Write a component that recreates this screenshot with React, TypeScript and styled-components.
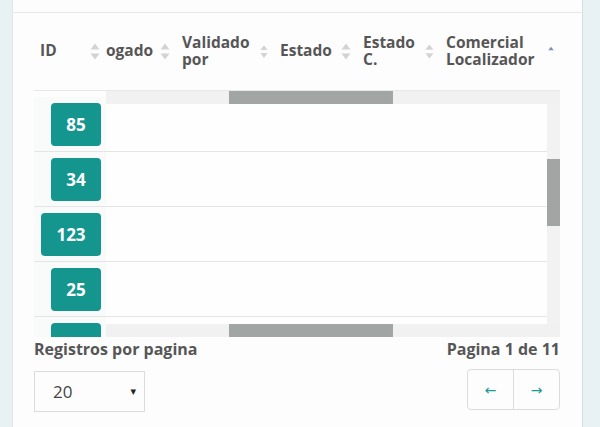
import React from "react";
import styled, { createGlobalStyle } from "styled-components";

const GlobalStyle = createGlobalStyle`
  body {
    margin: 0;
    background: #e8f2f5;
    font-family: "Open Sans", "Liberation Sans", sans-serif;
  }
`;

const columns = [
  { label: "ID", width: 72, sort: "none" },
  { label: "ogado", width: 70, sort: "none", clipped: true },
  { label: "Validado por", width: 98, sort: "none" },
  { label: "Estado", width: 83, sort: "none" },
  { label: "Estado C.", width: 83, sort: "none" },
  { label: "Comercial Localizador", width: 120, sort: "asc" },
];

// last row is cut by the scroll area, its number is not visible
const ids = ["85", "34", "123", "25", ""];

function SortIcon({ active }: { active: boolean }) {
  return (
    <svg width="10" height="17" viewBox="0 0 10 17">
      <path d="M5 0.5 L9.5 6.5 L0.5 6.5 Z" fill={active ? "#7b8db5" : "#d1d3d5"} />
      {!active && <path d="M5 16.5 L9.5 10.5 L0.5 10.5 Z" fill="#d1d3d5" />}
    </svg>
  );
}

export default function App() {
  return (
    <>
      <GlobalStyle />
      <Page>
        <Card>
          <CardTop />
          <CardBody>
            <HeaderRow>
              {columns.map((c) => (
                <HeadCell key={c.label} width={c.width} $clipped={c.clipped}>
                  <HeadLabel>{c.label}</HeadLabel>
                  <SortIcon active={c.sort === "asc"} />
                </HeadCell>
              ))}
            </HeaderRow>

            <ScrollBox>
              <Rows>
                {ids.map((id, i) => (
                  <Row key={i}>
                    <IdCell>
                      <Badge $wide={id.length > 2}>{id}</Badge>
                    </IdCell>
                    <RestCell />
                  </Row>
                ))}
              </Rows>
              <HTrack $pos="top">
                <HThumb />
              </HTrack>
              <VTrack>
                <VThumb />
              </VTrack>
              <HTrack $pos="bottom">
                <HThumb />
              </HTrack>
            </ScrollBox>

            <Footer>
              <FooterCol>
                <FooterLabel>Registros por pagina</FooterLabel>
                <Select>
                  <span>20</span>
                  <Caret>▾</Caret>
                </Select>
              </FooterCol>
              <FooterCol $right>
                <FooterLabel>Pagina 1 de 11</FooterLabel>
                <Pager>
                  <PagerButton>←</PagerButton>
                  <PagerButton>→</PagerButton>
                </Pager>
              </FooterCol>
            </Footer>
          </CardBody>
        </Card>
      </Page>
    </>
  );
}

const Page = styled.div`
  display: flex;
  height: 427px;
  padding: 0 17px 0 12px;
  overflow: hidden;
`;

const Card = styled.div`
  flex: 1;
  background: #fdfdfe;
  border-left: 1px solid #dfe7ea;
  border-right: 1px solid #d6dfe2;
`;

const CardTop = styled.div`
  height: 12px;
  border-bottom: 1px solid #e6e9ea;
`;

const CardBody = styled.div`
  padding: 0 22px 0 21px;
`;

const HeaderRow = styled.div`
  display: flex;
  height: 77px;
`;

const HeadCell = styled.div<{ width: number; $clipped?: boolean }>`
  width: ${(p) => p.width}px;
  flex-shrink: 0;
  box-sizing: border-box;
  padding: 0 6px 0 ${(p) => (p.$clipped ? 0 : 6)}px;
  display: flex;
  align-items: center;
  justify-content: space-between;
`;

const HeadLabel = styled.span`
  font-size: 15.5px;
  font-weight: 700;
  line-height: 17px;
  color: #565656;
  margin-top: -2px;
`;

const ScrollBox = styled.div`
  position: relative;
  height: 246px;
  overflow: hidden;
  border-top: 1px solid #e6e7e7;
`;

const Rows = styled.div`
  padding-top: 6px;
`;

const Row = styled.div`
  display: flex;
  height: 55px;
  box-sizing: border-box;
  border-bottom: 1px solid #e4e5e5;
`;

const IdCell = styled.div`
  width: 72px;
  flex-shrink: 0;
  box-sizing: border-box;
  background: #f9fafa;
  display: flex;
  justify-content: flex-end;
  align-items: center;
  padding: 0 5px 0 0;
`;

const RestCell = styled.div`
  flex: 1;
  background: #fefefe;
`;

const Badge = styled.div<{ $wide: boolean }>`
  width: ${(p) => (p.$wide ? 60 : 50)}px;
  height: 43px;
  border-radius: 4px;
  background: #14968f;
  color: #fff;
  font-size: 17px;
  font-weight: 700;
  display: flex;
  align-items: center;
  justify-content: center;
`;

const HTrack = styled.div<{ $pos: "top" | "bottom" }>`
  position: absolute;
  left: 72px;
  right: 0;
  height: 13px;
  ${(p) => (p.$pos === "top" ? "top: 0;" : "bottom: 0;")}
  background: #f0f1f0;
`;

const HThumb = styled.div`
  margin-left: 123px;
  width: 164px;
  height: 100%;
  background: #a1a5a3;
`;

const VTrack = styled.div`
  position: absolute;
  right: 0;
  top: 13px;
  bottom: 13px;
  width: 13px;
  background: #f1f2f1;
`;

const VThumb = styled.div`
  margin-top: 55px;
  height: 67px;
  background: #a1a5a3;
`;

const Footer = styled.div`
  display: flex;
  justify-content: space-between;
  margin-top: 2px;
`;

const FooterCol = styled.div<{ $right?: boolean }>`
  display: flex;
  flex-direction: column;
  align-items: ${(p) => (p.$right ? "flex-end" : "flex-start")};
  gap: ${(p) => (p.$right ? 10 : 12)}px;
`;

const FooterLabel = styled.div`
  font-size: 16px;
  font-weight: 700;
  line-height: 20px;
  color: #565656;
`;

const Select = styled.div`
  width: 111px;
  height: 41px;
  box-sizing: border-box;
  border: 1px solid #dcdcdc;
  display: flex;
  align-items: center;
  justify-content: space-between;
  padding: 0 8px 0 18px;
  font-size: 17px;
  color: #444;
`;

const Caret = styled.span`
  font-family: "DejaVu Sans", sans-serif;
  font-size: 11px;
  color: #222;
`;

const Pager = styled.div`
  display: flex;
  height: 41px;
  border: 1px solid #dcdcdc;
  border-radius: 4px;
  box-sizing: border-box;
  overflow: hidden;
`;

const PagerButton = styled.div`
  width: 45px;
  display: flex;
  align-items: center;
  justify-content: center;
  font-family: "DejaVu Sans", sans-serif;
  font-size: 14px;
  color: #1a9a94;
  & + & {
    border-left: 1px solid #dcdcdc;
  }
`;
